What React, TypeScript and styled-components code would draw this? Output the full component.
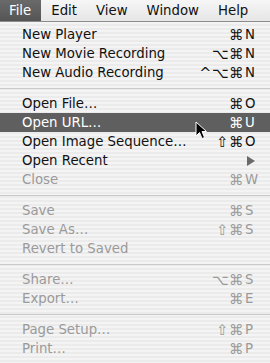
import styled, { createGlobalStyle } from "styled-components";

const GlobalStyle = createGlobalStyle`
  html, body {
    margin: 0;
    padding: 0;
    background: #ececec;
  }
  body {
    width: 270px;
    height: 363px;
    overflow: hidden;
    font-family: "DejaVu Sans", "Liberation Sans", sans-serif;
  }
`

const Screen = styled.div`
  width: 270px;
  height: 363px;
  display: flex;
  flex-direction: column;
  overflow: hidden;
`

const MenuBar = styled.div`
  height: 21px;
  display: flex;
  align-items: stretch;
  background: linear-gradient(#f6f6f6, #e6e6e6);
  border-bottom: 1px solid #8c8c8c;
  font-size: 13.3px;
  flex-shrink: 0;
`

const BarItem = styled.div<{ $active?: boolean }>`
  display: flex;
  align-items: center;
  padding: 0 ${p => (p.$active ? "10px" : "9px")} 0 ${p => (p.$active ? "9px" : "10px")};
  color: ${p => (p.$active ? "#ffffff" : "#111111")};
  background: ${p => (p.$active ? "linear-gradient(#6a6a6a, #555555)" : "transparent")};
`

const Menu = styled.div`
  flex: 1;
  padding: 3px 0 4px;
  background: repeating-linear-gradient(
    #f4f4f4 0px,
    #f4f4f4 2px,
    #ebebeb 2px,
    #ebebeb 4px
  );
  font-size: 13.3px;
`

const Row = styled.div<{ $highlight?: boolean; $disabled?: boolean }>`
  position: relative;
  height: 19px;
  display: flex;
  align-items: center;
  padding: 0 12px 0 22px;
  background: ${p => (p.$highlight ? "#5f5f5f" : "transparent")};
  color: ${p => (p.$highlight ? "#ffffff" : p.$disabled ? "#9a9a9a" : "#111111")};
  white-space: nowrap;
`

const Label = styled.span`
  flex: 1;
`

const Shortcut = styled.span`
  display: flex;
  align-items: center;
`

const Mods = styled.span`
  font-size: 14.5px;
  letter-spacing: 0.5px;
`

const Key = styled.span`
  width: 13px;
  text-align: left;
  padding-left: 1px;
`

const Arrow = styled.svg`
  width: 8px;
  height: 10px;
  margin-right: 3px;
`

const Separator = styled.div`
  height: 12px;
  display: flex;
  align-items: center;
  &::after {
    content: "";
    flex: 1;
    height: 1px;
    background: #c9c9c9;
  }
`

const Cursor = styled.svg`
  position: absolute;
  left: 195px;
  top: 8px;
  width: 12px;
  height: 19px;
`

type Item = {
  label: string
  mods?: string
  key?: string
  disabled?: boolean
  highlight?: boolean
  submenu?: boolean
  cursor?: boolean
}

const groups: Item[][] = [
  [
    { label: "New Player", mods: "\u2318", key: "N" },
    { label: "New Movie Recording", mods: "\u2325\u2318", key: "N" },
    { label: "New Audio Recording", mods: "^\u2325\u2318", key: "N" },
  ],
  [
    { label: "Open File\u2026", mods: "\u2318", key: "O" },
    { label: "Open URL\u2026", mods: "\u2318", key: "U", highlight: true, cursor: true },
    { label: "Open Image Sequence\u2026", mods: "\u21E7\u2318", key: "O" },
    { label: "Open Recent", submenu: true },
    { label: "Close", mods: "\u2318", key: "W", disabled: true },
  ],
  [
    { label: "Save", mods: "\u2318", key: "S", disabled: true },
    { label: "Save As\u2026", mods: "\u21E7\u2318", key: "S", disabled: true },
    { label: "Revert to Saved", disabled: true },
  ],
  [
    { label: "Share\u2026", mods: "\u2325\u2318", key: "S", disabled: true },
    { label: "Export\u2026", mods: "\u2318", key: "E", disabled: true },
  ],
  [
    { label: "Page Setup\u2026", mods: "\u21E7\u2318", key: "P", disabled: true },
    { label: "Print\u2026", mods: "\u2318", key: "P", disabled: true },
  ],
]

const MenuRow = ({ item }: { item: Item }) => (
  <Row $highlight={item.highlight} $disabled={item.disabled}>
    <Label>{item.label}</Label>
    {item.key && (
      <Shortcut>
        <Mods>{item.mods}</Mods>
        <Key>{item.key}</Key>
      </Shortcut>
    )}
    {item.submenu && (
      <Arrow viewBox="0 0 8 10">
        <path d="M0 0 L8 5 L0 10 Z" fill="#6a6a6a" />
      </Arrow>
    )}
    {item.cursor && (
      <Cursor viewBox="0 0 12 19">
        <path
          d="M1 1 L1 15 L4.5 11.5 L7 17.5 L9.5 16.5 L7 10.5 L11.5 10.5 Z"
          fill="#000000"
          stroke="#ffffff"
          strokeWidth="1"
          strokeLinejoin="miter"
        />
      </Cursor>
    )}
  </Row>
)

const App = () => {
  return (
    <>
      <GlobalStyle />
      <Screen>
        <MenuBar>
          <BarItem $active>File</BarItem>
          <BarItem>Edit</BarItem>
          <BarItem>View</BarItem>
          <BarItem>Window</BarItem>
          <BarItem>Help</BarItem>
        </MenuBar>
        <Menu>
          {groups.map((group, i) => (
            <div key={i}>
              {i > 0 && <Separator />}
              {group.map(item => (
                <MenuRow key={item.label} item={item} />
              ))}
            </div>
          ))}
        </Menu>
      </Screen>
    </>
  )
}

export default App
